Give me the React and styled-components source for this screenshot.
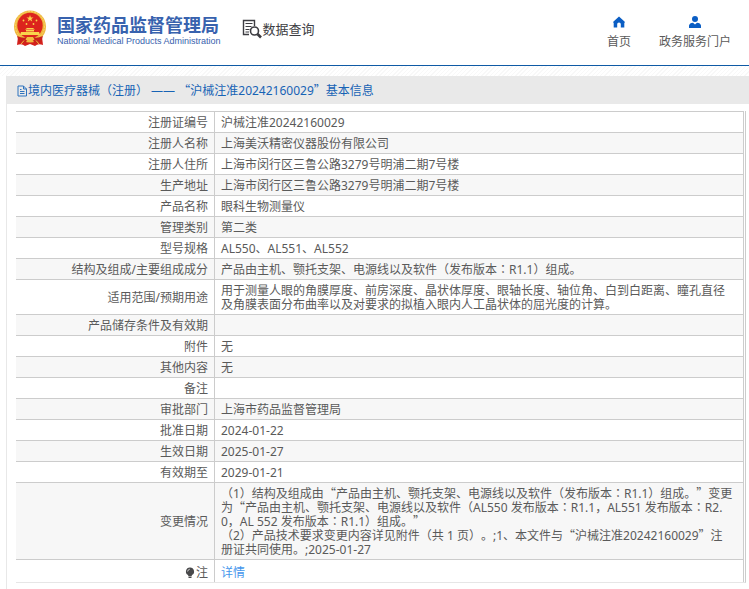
import React from "react";
import styled, { createGlobalStyle } from "styled-components";

const GlobalStyle = createGlobalStyle`
  * {
    box-sizing: border-box;
  }
  body {
    margin: 0;
    background-color: #fff;
    color: #5a5a5a;
    font-family: "Noto Sans", "Noto Sans CJK SC", sans-serif;
    font-size: 12px;
    line-height: 14px;
    text-spacing-trim: space-all;
  }
`
const Page = styled.div`
  display: flex;
  flex-direction: column;
  min-height: 100vh;
`
const Header = styled.header`
  display: flex;
  align-items: flex-start;
  height: 66px;
  padding: 0 18px 0 13px;
  border-bottom: 1px solid #0f5aa5;
`
const Brand = styled.a`
  display: flex;
  gap: 10px;
  padding-top: 10px;
  color: #3862ae;
  text-decoration: none;
`
const BrandText = styled.div`
  display: flex;
  flex-direction: column;
  padding-top: 4px;
`
const BrandName = styled.span`
  font-family: "Noto Sans CJK SC", sans-serif;
  font-size: 18px;
  font-weight: 700;
  line-height: 20px;
`
const BrandEnglish = styled.span`
  font-family: "Liberation Sans", sans-serif;
  font-size: 9px;
  line-height: 14px;
`
const SectionTitle = styled.div`
  display: flex;
  align-items: center;
  padding: 19px 0 0 21px;
  color: #3d3d42;
  font-size: 13px;
  line-height: 20px;
`
const Nav = styled.nav`
  display: flex;
  gap: 28px;
  margin-left: auto;
  padding-top: 16px;
`
const NavLink = styled.a`
  display: flex;
  flex-direction: column;
  align-items: center;
  gap: 7px;
  color: #5a5a5a;
  text-decoration: none;
`
const Content = styled.div`
  flex: 1;
  display: flex;
  padding: 10px 0 0 6px;
  background-image: repeating-linear-gradient(135deg, #fff 0 2px, #f8f8f8 2px 3px);
  background-size: 100% 10px;
  background-repeat: no-repeat;
`
const Panel = styled.main`
  flex: 1;
  min-width: 0;
  border-left: 1px solid #e8e8e8;
  background-color: #fff;
`
const PanelTitle = styled.h1`
  display: flex;
  align-items: center;
  height: 28px;
  margin: 0;
  padding: 2px 0 0 10px;
  background-color: #e9e9e9;
  color: #1763b5;
  font-size: 12px;
  font-weight: 400;
  white-space: pre;
`
const TableWrap = styled.div`
  margin: 7px 3px 0 9px;
  padding-right: 1px;
  border-right: 1px solid #ccc;
  border-bottom: 1px solid #e6e6e6;
`
const Table = styled.table`
  width: 100%;
  table-layout: fixed;
  border-collapse: separate;
  border-spacing: 0;
  border-top: 1px solid #ccc;
`
const Row = styled.tr`
  &:nth-child(even) {
    background-color: #f7f7f7;
  }
  &:last-child > * {
    padding-top: 6px;
    border-bottom: 0;
  }
`
const Label = styled.th`
  width: 199px;
  padding: 4px 6px 2px;
  border-right: 1px solid #ccc;
  border-bottom: 1px solid #ccc;
  font-weight: 400;
  text-align: right;
`
const Value = styled.td`
  padding: 4px 8px 2px 6px;
  border-right: 1px solid #ccc;
  border-bottom: 1px solid #ccc;
  white-space: pre-line;
`
const LabelWithIcon = styled.span`
  display: flex;
  align-items: center;
  justify-content: flex-end;
  gap: 1px;
`
const DetailLink = styled.a`
  color: #4596ec;
  text-decoration: none;
`
// quotes and colons take a full, centred cell
const Wide = styled.span`
  font-family: "Noto Sans CJK TC", sans-serif;
  line-height: 0;
`

const rows = [
  ["注册证编号", "沪械注准20242160029"],
  ["注册人名称", "上海美沃精密仪器股份有限公司"],
  ["注册人住所", "上海市闵行区三鲁公路3279号明浦二期7号楼"],
  ["生产地址", "上海市闵行区三鲁公路3279号明浦二期7号楼"],
  ["产品名称", "眼科生物测量仪"],
  ["管理类别", "第二类"],
  ["型号规格", "AL550、AL551、AL552"],
  ["结构及组成/主要组成成分", "产品由主机、颚托支架、电源线以及软件（发布版本：R1.1）组成。"],
  ["适用范围/预期用途", "用于测量人眼的角膜厚度、前房深度、晶状体厚度、眼轴长度、轴位角、白到白距离、瞳孔直径及角膜表面分布曲率以及对要求的拟植入眼内人工晶状体的屈光度的计算。"],
  ["产品储存条件及有效期", ""],
  ["附件", "无"],
  ["其他内容", "无"],
  ["备注", ""],
  ["审批部门", "上海市药品监督管理局"],
  ["批准日期", "2024-01-22"],
  ["生效日期", "2025-01-27"],
  ["有效期至", "2029-01-21"],
  ["变更情况", "（1）结构及组成由“产品由主机、颚托支架、电源线以及软件（发布版本：R1.1）组成。”变更\n为“产品由主机、颚托支架、电源线以及软件（AL550 发布版本：R1.1，AL551 发布版本：R2.\n0，AL 552 发布版本：R1.1）组成。”\n（2）产品技术要求变更内容详见附件（共 1 页）。;1、本文件与“沪械注准20242160029”注\n册证共同使用。;2025-01-27"],
];

// an empty value still holds one line open
const Text = ({ children }) =>
  (children || "\u00a0").split(/([“”：])/).map((part, i) =>
    i % 2 ? <Wide key={i}>{part}</Wide> : part
  );

const Emblem = () => (
  <svg width="34" height="37" viewBox="0 0 34 37" aria-hidden="true">
    <path d="M5 27 L4 35 Q9 33 12 36 L17 34 L22 36 Q25 33 30 35 L29 27Z" fill="#d4201c" />
    <circle cx="17" cy="16.500" r="16" fill="#f0b93f" />
    <circle cx="17" cy="16" r="14.500" fill="none" stroke="#f8d36a" strokeWidth="1" strokeDasharray="2 1" />
    <circle cx="17" cy="15.500" r="12.700" fill="#dc241d" />
    <path d="M17 5 L17.900 7.500 L20.500 7.500 L18.400 9.100 L19.200 11.600 L17 10.100 L14.800 11.600 L15.600 9.100 L13.500 7.500 L16.100 7.500Z" fill="#f9d44c" />
    <g fill="#f9d44c">
      <circle cx="10.500" cy="10.500" r="0.900" />
      <circle cx="23.500" cy="10.500" r="0.900" />
      <circle cx="13.500" cy="14" r="0.900" />
      <circle cx="20.500" cy="14" r="0.900" />
      <path d="M12 19.500 L14 18 H20 L22 19.500Z M13 20 H21 V21.500 H13Z M8 22 H26 L27 25 H7Z" />
    </g>
    <path d="M4 26 Q11 29 13 27 H21 Q23 29 30 26 L28 32 Q22 34 20 31 H14 Q12 34 6 32Z" fill="#c9211c" />
    <path d="M14 27 H20 L21.500 29.500 L19.500 31 H14.500 L12.500 29.500Z" fill="#f2bd3f" />
    <path d="M8 34 L11 30.500 M26 34 L23 30.500" stroke="#f2bd3f" />
  </svg>
);

const SearchDocIcon = () => (
  <svg width="21" height="20" viewBox="0 0 21 20" fill="none" stroke="#3d3d42" aria-hidden="true">
    <path d="M7 15.500 H1.500 V1.500 H12.500 V7" strokeWidth="1.400" />
    <path d="M3.500 4.500 H10.500 M3.500 7.500 H9.500 M3.500 10.500 H7.500 M3.500 13 H7" />
    <circle cx="12.500" cy="12" r="4" strokeWidth="1.600" />
    <path d="M15.500 15 L19 18.500" strokeWidth="2.600" />
  </svg>
);

const HomeIcon = () => (
  <svg width="12" height="12" viewBox="0 0 12 12" fill="#0b5ec4" aria-hidden="true">
    <path d="M6 0.500 L12 6 V6.500 H11.300 V11.500 H7.800 V8 Q7.800 6.500 6 6.500 Q4.200 6.500 4.200 8 V11.500 H0.700 V6.500 H0 V6Z" />
  </svg>
);

const UserIcon = () => (
  <svg width="12" height="12" viewBox="0 0 12 12" fill="#0b5ec4" aria-hidden="true">
    <circle cx="6" cy="3" r="3" />
    <path d="M0 12 V9.500 Q0.500 7 4 6.700 L6 8.500 L8 6.700 Q11.500 7 12 9.500 V12Z" />
  </svg>
);

const DocIcon = () => (
  <svg width="11" height="12" viewBox="0 0 11 12" fill="none" stroke="#2f73bd" aria-hidden="true">
    <path d="M1 1 H6.500 L9.500 4 V11 H1Z M6.500 1 V4 H9.500 M3 6.500 H7.500 M3 8.500 H7.500 M3 4.500 H4.500" />
  </svg>
);

const BulbIcon = () => (
  <svg width="10" height="12" viewBox="0 0 10 12" aria-hidden="true">
    <path d="M5 0.500 A4 4 0 0 1 7 8 L6.500 9.500 H3.500 L3 8 A4 4 0 0 1 5 0.500Z M3.500 10 H6.500 V11 H3.500Z" fill="#48484a" />
    <path d="M2.600 4.500 Q2.800 2.500 4.800 2.200" fill="none" stroke="#ddd" strokeWidth="0.900" />
  </svg>
);

const App = () => {
  return (
    <Page>
      <GlobalStyle />
      <Header>
        <Brand href="#">
          <Emblem />
          <BrandText>
            <BrandName>国家药品监督管理局</BrandName>
            <BrandEnglish>National Medical Products Administration</BrandEnglish>
          </BrandText>
        </Brand>
        <SectionTitle>
          <SearchDocIcon />
          数据查询
        </SectionTitle>
        <Nav>
          <NavLink href="#">
            <HomeIcon />
            首页
          </NavLink>
          <NavLink href="#">
            <UserIcon />
            政务服务门户
          </NavLink>
        </Nav>
      </Header>

      <Content>
        <Panel>
          <PanelTitle>
            <DocIcon />
            <span>
              <Text>境内医疗器械（注册） —— “沪械注准20242160029”基本信息</Text>
            </span>
          </PanelTitle>
          <TableWrap>
            <Table>
              <tbody>
                {rows.map(([label, value]) => (
                  <Row key={label}>
                    <Label scope="row">{label}</Label>
                    <Value><Text>{value}</Text></Value>
                  </Row>
                ))}
                <Row>
                  <Label scope="row">
                    <LabelWithIcon><BulbIcon />注</LabelWithIcon>
                  </Label>
                  <Value><DetailLink href="#">详情</DetailLink></Value>
                </Row>
              </tbody>
            </Table>
          </TableWrap>
        </Panel>
      </Content>
    </Page>
  );
};

export default App;
